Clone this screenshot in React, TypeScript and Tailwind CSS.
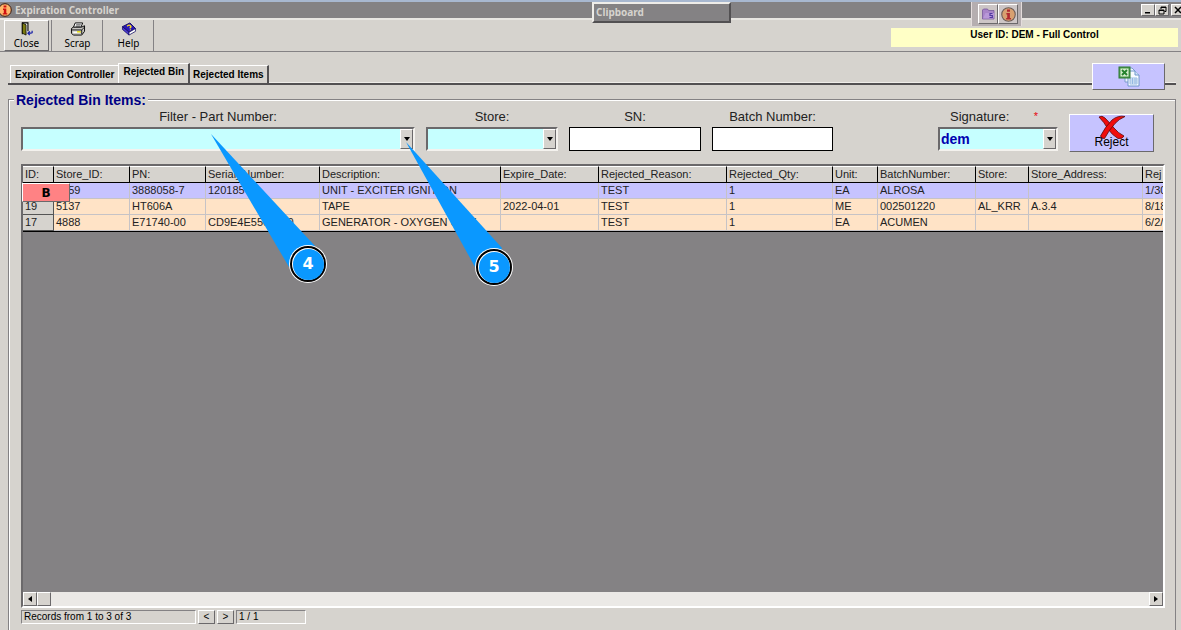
import type { ReactNode } from "react";

const raised = "border border-t-white border-l-white border-r-[#6b696b] border-b-[#6b696b]";
const sunken = "border border-t-[#848284] border-l-[#848284] border-r-white border-b-white";

function InfoIcon({ size, muted }: { size: number; muted?: boolean }) {
  return (
    <svg width={size} height={size} viewBox="0 0 14 14" className="shrink-0">
      <circle cx="7" cy="7" r="6.3" fill={muted ? "#d8a070" : "#ffb66b"} stroke={muted ? "#6b5a55" : "#3a1a10"} strokeWidth="1" />
      <path d="M5.6 2.4h2.8v2H5.6zM5 5.6h3.3v4.6h1v1.4H4.8v-1.4h1V7H5z" fill={muted ? "#b02a30" : "#d01010"} />
    </svg>
  );
}

function DoorIcon() {
  return (
    <svg width="14" height="15" viewBox="0 0 14 15">
      <path d="M2 13V1h6v9" fill="#fff" stroke="#000" strokeWidth="1.2" />
      <path d="M2 1l4 2v11l-4-2z" fill="#7b7a10" stroke="#000" strokeWidth=".8" />
      <path d="M8 12h4M10 10l-2 2 2 2M12.5 12V9.5" fill="none" stroke="#1820a8" strokeWidth="1.3" />
    </svg>
  );
}

function PrinterIcon() {
  return (
    <svg width="16" height="15" viewBox="0 0 16 15">
      <path d="M5 1h8l-2 5H3z" fill="#fff" stroke="#000" />
      <path d="M6 3h5M5.5 4.5h5" stroke="#000" strokeWidth=".7" />
      <path d="M1 7l2-1.5h9L15 4v6l-3 4H3l-2-2z" fill="#c9c7c3" stroke="#000" />
      <path d="M1 8.5h11L15 5.5M12 8.5V13" fill="none" stroke="#000" strokeWidth=".9" />
      <path d="M3 11h7" stroke="#fff" strokeWidth="1.5" />
      <path d="M7 10.5h4" stroke="#e5dc10" strokeWidth="1.6" />
    </svg>
  );
}

function BookIcon() {
  return (
    <svg width="16" height="15" viewBox="0 0 16 15">
      <path d="M1 5l8-4 6 6-7 4z" fill="#2a18b8" stroke="#120a60" />
      <path d="M1 5v3l7 6v-3z" fill="#4a3ad0" stroke="#120a60" strokeWidth=".8" />
      <path d="M8 11l7-4v3l-7 4z" fill="#fff" stroke="#120a60" strokeWidth=".8" />
      <path d="M6 4.5q2-2 3.5-.5t-.8 2.5M9 8.2l.8.3" fill="none" stroke="#ffe020" strokeWidth="1.5" />
    </svg>
  );
}

function FolderIcon() {
  return (
    <svg width="15" height="14" viewBox="0 0 14 14">
      <path d="M1 3l1-1h4l1 1.5h5.5V12H1z" fill="#a884c8" stroke="#76589a" strokeWidth=".8" />
      <path d="M1.500 11.500L4 6h9l-1 5.500z" fill="#b898d8" />
      <path d="M11 6.500H8.500v2h2.300v2H8" fill="none" stroke="#5038a0" strokeWidth="1.200" />
    </svg>
  );
}

function ExcelIcon() {
  return (
    <svg width="22" height="21" viewBox="0 0 22 21">
      <path d="M7 2h7l4 4v10H7z" fill="#eef5ff" stroke="#7c9ccc" />
      <path d="M10 5h7l4 4v11H10z" fill="#f8fbff" stroke="#6f96cc" />
      <path d="M17 5v4h4" fill="#d4e4f8" stroke="#6f96cc" />
      <path d="M12 12h7v6h-7zM12 14h7M12 16h7M14.500 12v6M17 12v6" fill="none" stroke="#8fb4e0" strokeWidth=".9" />
      <rect x="1" y="1" width="11" height="11" fill="#4a9a4a" stroke="#2f7834" />
      <rect x="2.500" y="2.500" width="8" height="8" fill="#d8efd0" />
      <path d="M4 4l5 5M9 4L4 9" stroke="#24822c" strokeWidth="1.900" />
    </svg>
  );
}

function RejectIcon() {
  return (
    <svg width="28" height="25" viewBox="0 0 28 25" className="col-start-1 row-start-1 self-start">
      <path d="M1 2Q4 0 7 3Q12 8 16 13Q20 18 26 21Q25 24 20 23.500Q14 20 10 14Q6 7 1 2z" fill="#f00c0c" stroke="#5a0808" strokeWidth=".8" />
      <path d="M27 1.500Q20 0 14 5Q7 12 2.500 21Q3.500 24 6.500 23.500Q11 15 17 8.500Q21 4 27 1.500z" fill="#f00c0c" stroke="#5a0808" strokeWidth=".8" />
    </svg>
  );
}

function ToolButton({ label, icon, active }: { label: string; icon: ReactNode; active?: boolean }) {
  return (
    <div className="flex border-r border-[#848284] pr-[2px] pl-[3px]">
      <button className={"flex h-[31px] w-[45px] flex-col items-center justify-between pt-px font-['Noto_Sans'] text-[10px] leading-[14px] text-black " + (active ? raised : "border border-transparent")}>
        {icon}
        {label}
      </button>
    </div>
  );
}

function Combo({ id, value }: { id: string; value: string }) {
  return (
    <div className="grid h-6 border-2 border-t-[#6b696b] border-l-[#6b696b] border-r-[#f4f2ee] border-b-[#f4f2ee] bg-[#c6ffff]">
      <select id={id} defaultValue={value} className="col-start-1 row-start-1 w-full appearance-none bg-transparent px-px text-sm leading-4 font-bold text-[#0000b0] outline-none">
        <option value={value}>{value}</option>
      </select>
      <span className={"pointer-events-none col-start-1 row-start-1 flex w-[13px] items-center justify-center justify-self-end bg-[#d6d3ce] " + raised}>
        <svg width="6" height="4" viewBox="0 0 6 4"><path d="M0 0h6L3 4z" fill="#000" /></svg>
      </span>
    </div>
  );
}

function Field({ id, label, width, required, children }: { id: string; label: string; width: string; required?: boolean; children: ReactNode }) {
  return (
    <div className={"flex flex-col gap-[2px] " + width}>
      <div className="flex justify-center text-[13px] leading-4 text-[#222]">
        <label htmlFor={id} className={required ? "flex-1 pl-3" : ""}>{label}</label>
        {required && <span className="pr-5 text-[11px] leading-[14px] text-red-600">*</span>}
      </div>
      {children}
    </div>
  );
}

const columns = [
  { name: "ID:", width: "w-[31px]" },
  { name: "Store_ID:", width: "w-[76px]" },
  { name: "PN:", width: "w-[76px]" },
  { name: "Serial_Number:", width: "w-[114px]" },
  { name: "Description:", width: "w-[181px]" },
  { name: "Expire_Date:", width: "w-[98px]" },
  { name: "Rejected_Reason:", width: "w-[128px]" },
  { name: "Rejected_Qty:", width: "w-[106px]" },
  { name: "Unit:", width: "w-[45px]" },
  { name: "BatchNumber:", width: "w-[98px]" },
  { name: "Store:", width: "w-[53px]" },
  { name: "Store_Address:", width: "w-[114px]" },
  { name: "Rej", width: "w-[400px]" },
];

const rows = [
  ["", "5159", "3888058-7", "120185", "UNIT - EXCITER IGNITION", "", "TEST", "1", "EA", "ALROSA", "", "", "1/30"],
  ["19", "5137", "HT606A", "", "TAPE", "2022-04-01", "TEST", "1", "ME", "002501220", "AL_KRR", "A.3.4", "8/18"],
  ["17", "4888", "E71740-00", "CD9E4E5500000", "GENERATOR - OXYGEN UNIT", "", "TEST", "1", "EA", "ACUMEN", "", "", "6/2/"],
];

function Grid() {
  return (
    <div className="relative flex flex-1 flex-col border-2 border-t-[#6b696b] border-l-[#6b696b] border-r-white border-b-white bg-[#848284]">
      <div className="flex-1 overflow-hidden">
        <table className="w-[1520px] table-fixed border-separate border-spacing-0 border-b border-black text-[11px] leading-[15px] whitespace-nowrap text-[#222]">
          <thead>
            <tr className="h-[17px]">
              {columns.map((c) => (
                <th key={c.name} className={"overflow-hidden border-t border-r border-b border-t-white border-r-black border-b-black bg-[#d6d3ce] px-[2px] text-left font-normal " + c.width}>{c.name}</th>
              ))}
            </tr>
          </thead>
          <tbody>
            {rows.map((r, i) => (
              <tr key={i} className={"h-4 " + (i === 0 ? "bg-[#c6c3ff]" : "bg-[#ffe3c6]")}>
                {r.map((v, j) => (
                  <td key={j} className={"h-4 overflow-hidden border-r border-b p-0 pl-[2px] " + (j === 0 ? "border-[#555] bg-[#d6d3ce]" : "border-[#c6c3c6]")}>{v}</td>
                ))}
              </tr>
            ))}
          </tbody>
        </table>
      </div>
      <div className="flex h-[14px] bg-[#ebe9e6]">
        <button aria-label="Scroll left" className={"flex w-[14px] items-center justify-center bg-[#d6d3ce] " + raised}>
          <svg width="4" height="6" viewBox="0 0 4 6"><path d="M4 0v6L0 3z" /></svg>
        </button>
        <span className={"w-[14px] bg-[#d6d3ce] " + raised} />
        <span className="flex-1" />
        <button aria-label="Scroll right" className={"flex w-[14px] items-center justify-center bg-[#d6d3ce] " + raised}>
          <svg width="4" height="6" viewBox="0 0 4 6"><path d="M0 0v6l4-3z" /></svg>
        </button>
      </div>
      <div className={"absolute top-[17px] -left-px flex h-[19px] w-12 items-center justify-center bg-[#ff8284] pt-px font-['DejaVu_Sans'] text-xs font-bold text-black " + raised}>B</div>
    </div>
  );
}

function Marker({ label, place }: { label: string; place: string }) {
  return (
    <div className={"absolute flex size-[38px] items-center justify-center rounded-full bg-white " + place}>
      <div className="flex size-9 items-center justify-center rounded-full border-2 border-black bg-white">
        <div className="flex size-[31px] items-center justify-center rounded-full bg-[#0a98ff] font-['DejaVu_Sans'] text-base font-bold text-white">{label}</div>
      </div>
    </div>
  );
}

export default function App() {
  return (
    <div className="relative flex min-h-screen flex-col overflow-hidden bg-[#d6d3ce] font-['Liberation_Sans',Arial,sans-serif] text-black">
      <header className="flex h-[18px] items-center border-t-2 border-[#a8b8d0] bg-[#848284]">
        <div className="-ml-[2px] flex flex-1 items-center gap-[3px]">
          <InfoIcon size={14} />
          <h1 className="font-['Noto_Sans'] text-[10px] leading-4 font-bold text-[#d6d3ce]">Expiration Controller</h1>
        </div>
        <div className="-mr-1 flex">
          <button aria-label="Minimize" className={"flex h-3 w-[14px] items-center justify-center bg-[#d6d3ce] " + raised}>
            <svg width="8" height="8" viewBox="0 0 8 8"><path d="M1 6h5v1.500H1z" /></svg>
          </button>
          <button aria-label="Restore" className={"flex h-3 w-[14px] items-center justify-center bg-[#d6d3ce] " + raised}>
            <svg width="9" height="9" viewBox="0 0 9 9" fill="none" stroke="#000"><path d="M3 3V1h5v4.500H6.500M3 1.500h5M1 4h5v4H1zM1 4.500h5" /></svg>
          </button>
          <button aria-label="Close window" className={"ml-[2px] flex h-3 w-[14px] items-center justify-center bg-[#d6d3ce] " + raised}>
            <svg width="8" height="8" viewBox="0 0 8 8" stroke="#000" strokeWidth="1.500"><path d="M1 1l6 6M7 1L1 7" /></svg>
          </button>
        </div>
      </header>

      <div className="flex items-start justify-between border-t-2 border-b border-t-[#e8e6e2] border-b-[#848284] pr-[3px] pl-px">
        <div className="flex">
          <ToolButton label="Close" icon={<DoorIcon />} active />
          <ToolButton label="Scrap" icon={<PrinterIcon />} />
          <ToolButton label="Help" icon={<BookIcon />} />
        </div>
        <p className="mt-2 h-[19px] w-[287px] bg-[#ffffc6] text-center text-[10px] leading-[14px] font-bold">User ID: DEM - Full Control</p>
      </div>

      <nav className="relative mt-[11px] mr-[5px] ml-2 flex items-end border-b-2 border-[#525052] pl-[2px] text-[10px] leading-3 font-bold">
        <button className="h-[18px] border-t border-l border-white px-1">Expiration Controller</button>
        <button className="h-5 border-t border-r-2 border-l border-t-white border-r-[#525052] border-l-white px-1 pb-1">Rejected Bin</button>
        <button className="h-[18px] border-t border-r-2 border-t-white border-r-[#525052] px-[3px]">Rejected Items</button>
        <span className="flex-1 self-end border-b border-[#efede9]" />
        <button aria-label="Export to Excel" className={"absolute top-0 right-[11px] flex h-[27px] w-[73px] items-center justify-center bg-[#c6c3ff] " + raised}>
          <ExcelIcon />
        </button>
      </nav>

      <section className="mt-[14px] mr-[5px] ml-2 flex flex-1 flex-col border-t border-r border-l border-[#848284] pr-[10px] pb-[6px] pl-3 shadow-[inset_1px_1px_0_#fff]">
        <h2 className="-mt-[9px] -ml-[7px] self-start bg-[#d6d3ce] px-[2px] text-sm leading-[18px] font-bold text-[#000084]">Rejected Bin Items:</h2>
        <div className="flex items-start gap-[11px] pr-[11px]">
          <Field id="pn" label="Filter - Part Number:" width="flex-1"><Combo id="pn" value="" /></Field>
          <Field id="store" label="Store:" width="w-[132px]"><Combo id="store" value="" /></Field>
          <Field id="sn" label="SN:" width="w-[132px]">
            <input id="sn" className="h-6 w-full border border-black bg-white px-1 text-sm outline-none" />
          </Field>
          <Field id="batch" label="Batch Number:" width="w-[121px]">
            <input id="batch" className="h-6 w-full border border-black bg-white px-1 text-sm outline-none" />
          </Field>
          <Field id="sign" label="Signature:" width="ml-[94px] w-[120px]" required><Combo id="sign" value="dem" /></Field>
          <button className={"mt-[5px] grid h-[38px] w-[85px] justify-items-center bg-[#c6c3ff] text-xs leading-3 " + raised}>
            <RejectIcon />
            <span className="col-start-1 row-start-1 self-end pb-[3px]">Reject</span>
          </button>
        </div>
        <div className="mt-3 flex flex-1 flex-col">
          <Grid />
        </div>
        <footer className="mt-[2px] flex h-[14px] items-stretch gap-[2px] text-[10px] leading-3">
          <span className={"w-[175px] px-[2px] " + sunken}>Records from 1 to 3 of 3</span>
          <button aria-label="Previous page" className={"w-[17px] " + raised}>&lt;</button>
          <button aria-label="Next page" className={"w-[17px] " + raised}>&gt;</button>
          <span className={"w-[70px] px-[2px] " + sunken}>1 / 1</span>
        </footer>
      </section>

      <div className="absolute top-[2px] left-[592px] h-[21px] w-[139px] border-2 border-t-[#efede9] border-r-[#525052] border-b-[#525052] border-l-[#efede9] bg-[#848284] px-[2px] font-['Noto_Sans'] text-[10px] leading-[17px] font-bold text-[#d6d3ce]">Clipboard</div>
      <div className="absolute top-[2px] left-[971px] flex h-6 w-[51px] items-start border-r border-l border-[#e4dcdc] bg-[#b5aeb0] pt-[2px] pl-[6px]">
        <button aria-label="Folder" className={"flex size-5 items-center justify-center bg-[#cdc6c6] " + raised}><FolderIcon /></button>
        <button aria-label="Information" className={"flex size-5 items-center justify-center bg-[#cdc6c6] " + raised}><InfoIcon size={15} muted /></button>
      </div>

      <div className="pointer-events-none absolute top-0 left-0">
        <svg width="520" height="290" viewBox="0 0 520 290" fill="#0a98ff">
          <path d="M211 134L315 246L308 264L289 267z" />
          <path d="M406 142L502 248L494 267L475 267z" />
        </svg>
        <Marker label="4" place="top-[245px] left-[289px]" />
        <Marker label="5" place="top-[248px] left-[475px]" />
      </div>
    </div>
  );
}
